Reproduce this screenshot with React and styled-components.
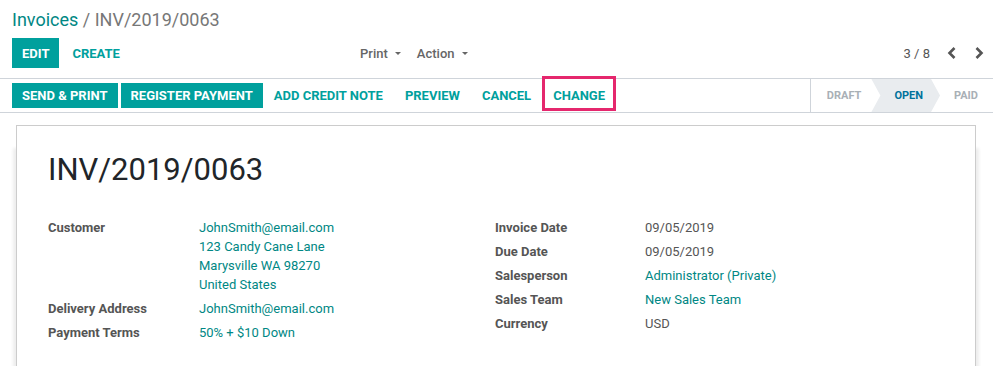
import React from "react";
import styled, { createGlobalStyle } from "styled-components";

const GlobalStyle = createGlobalStyle`
  html, body {
    margin: 0;
    padding: 0;
    background: #fff;
  }
  body {
    font-family: Roboto, "Noto Sans", "Liberation Sans", sans-serif;
    font-size: 13px;
    color: #4c4c4c;
  }
`;

const TEAL = "#00A09D";
const LINK = "#008784";
const LINE = "#cfd4da";

const ControlPanel = styled.div`
  padding: 8px 12px 10px;
  border-bottom: 1px solid ${LINE};
`;

const Breadcrumb = styled.div`
  font-size: 18px;
  line-height: 24px;
  color: #777;
  a {
    color: ${LINK};
    text-decoration: none;
  }
`;

const CpRow = styled.div`
  display: flex;
  margin-top: 6px;
  height: 30px;
`;

const CpLeft = styled.div`
  flex: 1;
  display: flex;
  justify-content: space-between;
  align-items: center;
`;

const CpRight = styled.div`
  flex: 1;
  display: flex;
  justify-content: flex-end;
  align-items: center;
`;

const ButtonGroup = styled.div`
  display: flex;
  align-items: center;
  height: 100%;
`;

const PrimaryButton = styled.button`
  border: 0;
  margin: 0;
  height: ${(p) => p.$height || 25}px;
  padding: 0 10px;
  background: ${TEAL};
  color: #fff;
  font: inherit;
  font-weight: 700;
  font-size: 13px;
  text-transform: uppercase;
  cursor: pointer;

  & + & {
    margin-left: 3px;
  }
`;

const LinkButton = styled.button`
  position: relative;
  border: 0;
  margin: 0;
  height: 100%;
  padding: 0 ${(p) => p.$pad || 12}px;
  background: transparent;
  color: ${TEAL};
  font: inherit;
  font-weight: 700;
  font-size: 13px;
  text-transform: uppercase;
  cursor: pointer;

  ${(p) =>
    p.$highlight &&
    `
    &::after {
      content: "";
      position: absolute;
      left: 0;
      right: 0;
      top: -3px;
      bottom: 1px;
      border: 3px solid #e5276d;
    }
  `}
`;

const Sidebar = styled.div`
  display: flex;
  align-items: center;
  margin-right: 21px;
`;

const Dropdown = styled.div`
  display: flex;
  align-items: center;
  gap: 7px;
  padding: 0 8px;
  color: #666;
  font-weight: 500;
`;

const Caret = styled.span`
  width: 0;
  height: 0;
  border-left: 3px solid transparent;
  border-right: 3px solid transparent;
  border-top: 3px solid #666;
`;

const Pager = styled.div`
  display: flex;
  align-items: center;
  color: #555;
  margin-right: -11px;
`;

const PagerValue = styled.span`
  margin-right: 8px;
`;

const PagerArrow = styled.span`
  display: flex;
  align-items: center;
  justify-content: center;
  width: 27px;
  height: 30px;
`;

const Statusbar = styled.div`
  display: flex;
  justify-content: space-between;
  align-items: center;
  height: 33px;
  padding-left: 12px;
  border-bottom: 1px solid ${LINE};
`;

const StatusList = styled.div`
  display: flex;
  align-self: stretch;
  border-left: 1px solid ${LINE};
`;

const StatusItem = styled.div`
  position: relative;
  display: flex;
  align-items: center;
  margin-left: -9px;
  padding: 0 ${(p) => (p.$active ? 17 : 19)}px 0 23px;
  font-size: 11px;
  font-weight: 700;
  color: ${(p) => (p.$active ? "#00729c" : "#a9b0b6")};
  background: ${(p) => (p.$active ? "#e9ecef" : "transparent")};
  z-index: ${(p) => (p.$active ? 1 : 0)};
  clip-path: ${(p) =>
    p.$active
      ? "polygon(0 0, calc(100% - 9px) 0, 100% 50%, calc(100% - 9px) 100%, 0 100%, 9px 50%)"
      : "none"};

  &:first-child {
    margin-left: 0;
    padding-left: 16px;
  }
  &:last-child {
    padding-right: 15px;
  }
`;

const SheetArea = styled.div`
  padding: 12px 17px 0 16px;
`;

const Sheet = styled.div`
  min-height: 300px;
  padding: 25px 33px 40px 31px;
  border: 1px solid #cccccc;
  background: #fff;
  box-shadow: 0 26px 3px 3px rgba(0, 0, 0, 0.07);
`;

const Title = styled.h1`
  margin: 0 0 30px;
  font-size: 31px;
  line-height: 1.2;
  font-weight: 400;
  color: #212529;
`;

const Groups = styled.div`
  display: grid;
  grid-template-columns: 1fr 1fr;
`;

const FieldGroup = styled.div`
  display: grid;
  grid-template-columns: ${(p) => p.$labelWidth}px 1fr;
  row-gap: 5px;
  align-content: start;
`;

const Label = styled.div`
  font-weight: 700;
  line-height: 19px;
  color: #555;
`;

const Value = styled.div`
  line-height: 19px;
  color: ${(p) => (p.$link ? LINK : "#555")};
`;

const Chevron = ({ dir }) => (
  <svg width="10" height="12" viewBox="0 0 10 12">
    <polyline
      points={dir === "left" ? "7.5,1 2.5,6 7.5,11" : "2.5,1 7.5,6 2.5,11"}
      fill="none"
      stroke="#555"
      strokeWidth="2.6"
    />
  </svg>
);

const leftFields = [
  {
    label: "Customer",
    lines: [
      "JohnSmith@email.com",
      "123 Candy Cane Lane",
      "Marysville WA 98270",
      "United States",
    ],
    link: true,
  },
  { label: "Delivery Address", lines: ["JohnSmith@email.com"], link: true },
  { label: "Payment Terms", lines: ["50% + $10 Down"], link: true },
];

const rightFields = [
  { label: "Invoice Date", lines: ["09/05/2019"] },
  { label: "Due Date", lines: ["09/05/2019"] },
  { label: "Salesperson", lines: ["Administrator (Private)"], link: true },
  { label: "Sales Team", lines: ["New Sales Team"], link: true },
  { label: "Currency", lines: ["USD"] },
];

const Fields = ({ items, labelWidth }) => (
  <FieldGroup $labelWidth={labelWidth}>
    {items.map((f) => (
      <React.Fragment key={f.label}>
        <Label>{f.label}</Label>
        <Value $link={f.link}>
          {f.lines.map((l) => (
            <div key={l}>{l}</div>
          ))}
        </Value>
      </React.Fragment>
    ))}
  </FieldGroup>
);

export default function App() {
  return (
    <>
      <GlobalStyle />
      <ControlPanel>
        <Breadcrumb>
          <a href="#">Invoices</a> / INV/2019/0063
        </Breadcrumb>
        <CpRow>
          <CpLeft>
            <ButtonGroup>
              <PrimaryButton $height={30}>Edit</PrimaryButton>
              <LinkButton $pad={13}>Create</LinkButton>
            </ButtonGroup>
            <Sidebar>
              <Dropdown>
                Print <Caret />
              </Dropdown>
              <Dropdown>
                Action <Caret />
              </Dropdown>
            </Sidebar>
          </CpLeft>
          <CpRight>
            <Pager>
              <PagerValue>3 / 8</PagerValue>
              <PagerArrow>
                <Chevron dir="left" />
              </PagerArrow>
              <PagerArrow>
                <Chevron dir="right" />
              </PagerArrow>
            </Pager>
          </CpRight>
        </CpRow>
      </ControlPanel>

      <Statusbar>
        <ButtonGroup>
          <PrimaryButton>Send &amp; Print</PrimaryButton>
          <PrimaryButton>Register Payment</PrimaryButton>
          <LinkButton $pad={11}>Add Credit Note</LinkButton>
          <LinkButton $pad={11}>Preview</LinkButton>
          <LinkButton $pad={11}>Cancel</LinkButton>
          <LinkButton $pad={11} $highlight>
            Change
          </LinkButton>
        </ButtonGroup>
        <StatusList>
          <StatusItem>DRAFT</StatusItem>
          <StatusItem $active>OPEN</StatusItem>
          <StatusItem>PAID</StatusItem>
        </StatusList>
      </Statusbar>

      <SheetArea>
        <Sheet>
          <Title>INV/2019/0063</Title>
          <Groups>
            <Fields items={leftFields} labelWidth={151} />
            <Fields items={rightFields} labelWidth={150} />
          </Groups>
        </Sheet>
      </SheetArea>
    </>
  );
}
